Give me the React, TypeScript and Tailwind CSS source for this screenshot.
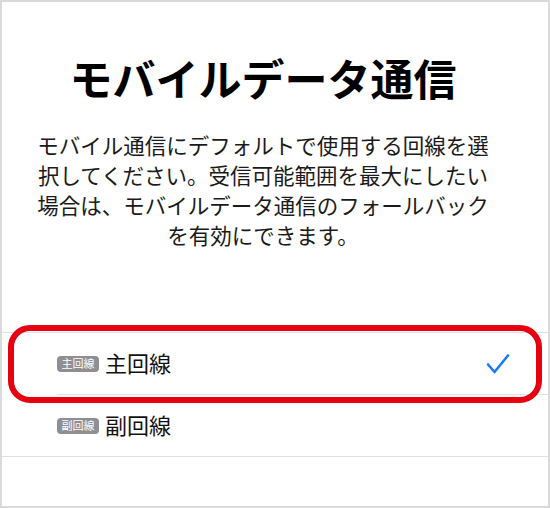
import React from "react";

const font = { fontFamily: '"Noto Sans CJK JP", "Noto Sans", sans-serif' };

function Badge({ label }: { label: string }) {
  return (
    <span className="flex h-[16px] w-[42px] items-center justify-center rounded-[4px] bg-[#8e8e93] text-[11px] leading-none text-white">
      {label}
    </span>
  );
}

function Row({ badge, label, checked }: { badge: string; label: string; checked?: boolean }) {
  return (
    <div className="flex h-[61px] items-center pl-[55px] pr-[38px]">
      <div className="flex flex-1 items-center gap-[6px]">
        <Badge label={badge} />
        <span className="mb-[3px] text-[22px] leading-none text-[#111]">{label}</span>
      </div>
      {checked && (
        <svg width="24" height="22" viewBox="0 0 24 22" fill="none">
          <path d="M2 11.5 L8.5 19 L22 2.5" stroke="#1a7cf5" strokeWidth="2.6" strokeLinecap="round" strokeLinejoin="round" />
        </svg>
      )}
    </div>
  );
}

export default function App() {
  return (
    <div style={font} className="relative h-[508px] w-[550px] border-2 border-[#dadada] bg-white">
      <div className="pr-[24px]">
        <h1 className="pt-[54px] text-center text-[43px] font-bold leading-none text-black">モバイルデータ通信</h1>
        <p className="mx-auto mt-[31px] w-[470px] text-center text-[21.5px] leading-[30px] text-[#1a1a1a]">
          モバイル通信にデフォルトで使用する回線を選択してください。受信可能範囲を最大にしたい場合は、モバイルデータ通信のフォールバックを有効にできます。
        </p>
      </div>
      <div className="mt-[82px] border-t border-[#e0e0e0]">
        <Row badge="主回線" label="主回線" checked />
        <div className="ml-[55px] border-t border-[#e0e0e0]" />
        <Row badge="副回線" label="副回線" />
        <div className="border-t border-[#e0e0e0]" />
      </div>
      <div className="pointer-events-none absolute left-[6px] top-[323px] h-[78px] w-[534px] rounded-[22px] border-[6px] border-[#e60012]" />
    </div>
  );
}
